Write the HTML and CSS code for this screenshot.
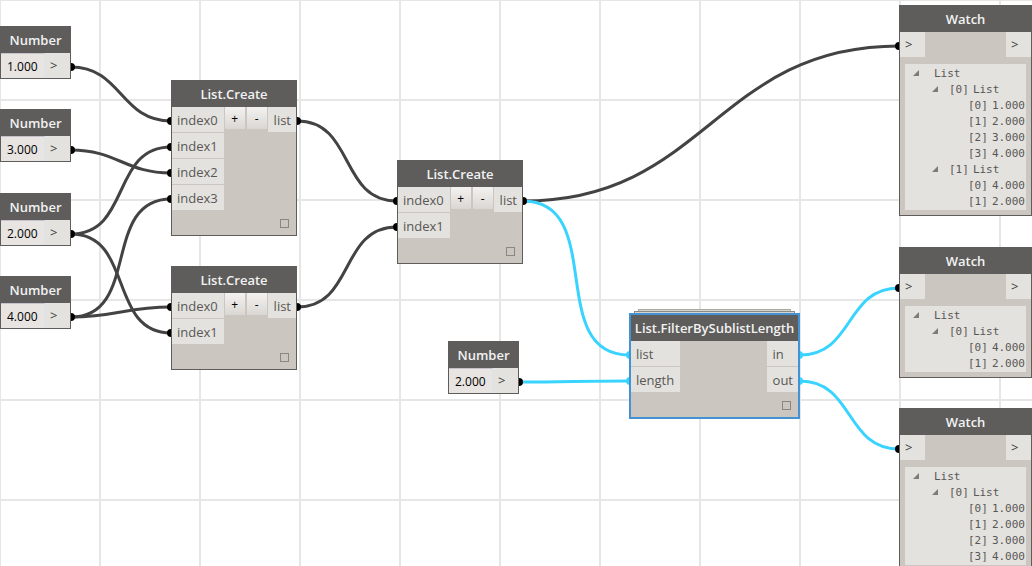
FILE: index.html
```html
<!DOCTYPE html>
<html lang="en">
<head>
<meta charset="utf-8">
<title>Node graph</title>
<link rel="stylesheet" href="styles.css">
</head>
<body>
<main class="canvas">
  <svg class="wires" aria-hidden="true">
    <g class="wire">
      <path d="M71 67C122 67 120 121 171 121"/>
      <path d="M71 150C117 150 125 173 171 173"/>
      <path d="M71 234C131 234 111 147 171 147"/>
      <path d="M71 234C134 234 108 333 171 333"/>
      <path d="M71 317C141 317 101 199 171 199"/>
      <path d="M71 317C116 317 126 307 171 307"/>
      <path d="M297 121C355 121 339 201 397 201"/>
      <path d="M297 307C355 307 339 227 397 227"/>
      <path d="M523 201C706 201 716 46 899 46"/>
    </g>
    <g class="wire wire-active">
      <path d="M523 201C607 201 545 355 629 355"/>
      <path d="M519 382C569 382 579 381 629 381"/>
      <path d="M800 355C854 355 845 288 899 288"/>
      <path d="M800 381C854 381 845 449 899 449"/>
    </g>
    <g class="dots">
      <circle cx="71" cy="67" r="4"/><circle cx="71" cy="150" r="4"/>
      <circle cx="71" cy="234" r="4"/><circle cx="71" cy="317" r="4"/>
      <circle cx="171" cy="121" r="4"/><circle cx="171" cy="147" r="4"/>
      <circle cx="171" cy="173" r="4"/><circle cx="171" cy="199" r="4"/>
      <circle cx="171" cy="307" r="4"/><circle cx="171" cy="333" r="4"/>
      <circle cx="297" cy="121" r="4"/><circle cx="297" cy="307" r="4"/>
      <circle cx="397" cy="201" r="4"/><circle cx="397" cy="227" r="4"/>
      <circle cx="523" cy="201" r="4"/><circle cx="519" cy="382" r="4"/>
      <circle cx="899" cy="46" r="4"/><circle cx="899" cy="288" r="4"/>
      <circle cx="899" cy="449" r="4"/>
    </g>
    <g class="dots dots-active">
      <circle cx="630" cy="355" r="4"/><circle cx="630" cy="381" r="4"/>
      <circle cx="799" cy="355" r="4"/><circle cx="799" cy="381" r="4"/>
    </g>
  </svg>

  <section class="node number number-a">
    <h2 class="title">Number</h2>
    <div class="row"><input class="value" type="text" value="1.000" aria-label="Number value"><span class="port arrow">&gt;</span></div>
  </section>
  <section class="node number number-b">
    <h2 class="title">Number</h2>
    <div class="row"><input class="value" type="text" value="3.000" aria-label="Number value"><span class="port arrow">&gt;</span></div>
  </section>
  <section class="node number number-c">
    <h2 class="title">Number</h2>
    <div class="row"><input class="value" type="text" value="2.000" aria-label="Number value"><span class="port arrow">&gt;</span></div>
  </section>
  <section class="node number number-d">
    <h2 class="title">Number</h2>
    <div class="row"><input class="value" type="text" value="4.000" aria-label="Number value"><span class="port arrow">&gt;</span></div>
  </section>
  <section class="node number number-e">
    <h2 class="title">Number</h2>
    <div class="row"><input class="value" type="text" value="2.000" aria-label="Number value"><span class="port arrow">&gt;</span></div>
  </section>

  <section class="node create create-a">
    <h2 class="title">List.Create</h2>
    <div class="row">
      <div class="ports"><span class="port">index0</span><span class="port">index1</span><span class="port">index2</span><span class="port">index3</span></div>
      <div class="steps"><button class="step" type="button" aria-label="Add input">+</button><button class="step" type="button" aria-label="Remove input">-</button></div>
      <div class="ports"><span class="port out">list</span></div>
    </div>
    <div class="footer"><input class="lacing" type="checkbox" aria-label="Lacing"></div>
  </section>
  <section class="node create create-b">
    <h2 class="title">List.Create</h2>
    <div class="row">
      <div class="ports"><span class="port">index0</span><span class="port">index1</span></div>
      <div class="steps"><button class="step" type="button" aria-label="Add input">+</button><button class="step" type="button" aria-label="Remove input">-</button></div>
      <div class="ports"><span class="port out">list</span></div>
    </div>
    <div class="footer"><input class="lacing" type="checkbox" aria-label="Lacing"></div>
  </section>
  <section class="node create create-c">
    <h2 class="title">List.Create</h2>
    <div class="row">
      <div class="ports"><span class="port">index0</span><span class="port">index1</span></div>
      <div class="steps"><button class="step" type="button" aria-label="Add input">+</button><button class="step" type="button" aria-label="Remove input">-</button></div>
      <div class="ports"><span class="port out">list</span></div>
    </div>
    <div class="footer"><input class="lacing" type="checkbox" aria-label="Lacing"></div>
  </section>

  <div class="sheet sheet-back"></div>
  <div class="sheet sheet-front"></div>
  <section class="node filter">
    <h2 class="title">List.FilterBySublistLength</h2>
    <div class="row">
      <div class="ports"><span class="port">list</span><span class="port">length</span></div>
      <div class="ports"><span class="port out">in</span><span class="port out">out</span></div>
    </div>
    <div class="footer"><input class="lacing" type="checkbox" aria-label="Lacing"></div>
  </section>

  <section class="node watch watch-a">
    <h2 class="title">Watch</h2>
    <div class="row"><span class="port arrow">&gt;</span><span class="port arrow">&gt;</span></div>
    <ul class="tree">
      <li><div class="item"><button class="caret" type="button" aria-label="Collapse"></button><span></span><span>List</span></div>
        <ul class="branch">
          <li><div class="item"><button class="caret" type="button" aria-label="Collapse"></button><span>[0]</span><span>List</span></div>
            <ul class="branch">
              <li class="item leaf"><span>[0]</span><span>1.000</span></li>
              <li class="item leaf"><span>[1]</span><span>2.000</span></li>
              <li class="item leaf"><span>[2]</span><span>3.000</span></li>
              <li class="item leaf"><span>[3]</span><span>4.000</span></li>
            </ul>
          </li>
          <li><div class="item"><button class="caret" type="button" aria-label="Collapse"></button><span>[1]</span><span>List</span></div>
            <ul class="branch">
              <li class="item leaf"><span>[0]</span><span>4.000</span></li>
              <li class="item leaf"><span>[1]</span><span>2.000</span></li>
            </ul>
          </li>
        </ul>
      </li>
    </ul>
  </section>
  <section class="node watch watch-b">
    <h2 class="title">Watch</h2>
    <div class="row"><span class="port arrow">&gt;</span><span class="port arrow">&gt;</span></div>
    <ul class="tree">
      <li><div class="item"><button class="caret" type="button" aria-label="Collapse"></button><span></span><span>List</span></div>
        <ul class="branch">
          <li><div class="item"><button class="caret" type="button" aria-label="Collapse"></button><span>[0]</span><span>List</span></div>
            <ul class="branch">
              <li class="item leaf"><span>[0]</span><span>4.000</span></li>
              <li class="item leaf"><span>[1]</span><span>2.000</span></li>
            </ul>
          </li>
        </ul>
      </li>
    </ul>
  </section>
  <section class="node watch watch-c">
    <h2 class="title">Watch</h2>
    <div class="row"><span class="port arrow">&gt;</span><span class="port arrow">&gt;</span></div>
    <ul class="tree">
      <li><div class="item"><button class="caret" type="button" aria-label="Collapse"></button><span></span><span>List</span></div>
        <ul class="branch">
          <li><div class="item"><button class="caret" type="button" aria-label="Collapse"></button><span>[0]</span><span>List</span></div>
            <ul class="branch">
              <li class="item leaf"><span>[0]</span><span>1.000</span></li>
              <li class="item leaf"><span>[1]</span><span>2.000</span></li>
              <li class="item leaf"><span>[2]</span><span>3.000</span></li>
              <li class="item leaf"><span>[3]</span><span>4.000</span></li>
            </ul>
          </li>
        </ul>
      </li>
    </ul>
  </section>
</main>
</body>
</html>
```
FILE: styles.css
```css
* { box-sizing: border-box; }

body {
  margin: 0;
  font: 13px/27px "Open Sans", sans-serif;
  color: #585755;
}

.canvas {
  position: relative;
  height: 100vh;
  overflow: hidden;
  background-color: #fff;
  background-image:
    linear-gradient(#e6e6e6 2px, transparent 2px),
    linear-gradient(90deg, #e6e6e6 2px, transparent 2px);
  background-size: 100px 100px;
  background-position: -1px -1px;
}

.wires { position: absolute; inset: 0; width: 100%; height: 100%; }
.wire { fill: none; stroke: #434343; stroke-width: 3; }
.wire-active { stroke: #38d4ff; }
.dots { fill: #000; }
.dots-active { fill: #38d4ff; }

/* Nodes */
.node {
  position: absolute;
  border: 1px solid #5e5d5b;
  background: #cbc6bf;
}
.title {
  margin: 0;
  height: 26px;
  background: #5e5d5b;
  color: #f2f2f2;
  font-size: 13px;
  font-weight: 600;
  text-align: center;
  white-space: nowrap;
}
.row { display: flex; justify-content: space-between; align-items: flex-start; }
.ports { display: grid; gap: 1px; background: #cbc6bf; }
.port {
  display: block;
  height: 25px;
  padding: 0 6px 0 5px;
  background: #e4e2de;
}
.out { padding: 0 5px 0 6px; }
.arrow {
  width: 25px;
  line-height: 25px;
  color: #3c3b3a;
}
.footer {
  display: flex;
  height: 25px;
  padding: 9px 7px 0;
  justify-content: flex-end;
}
.lacing {
  appearance: none;
  width: 9px;
  height: 9px;
  margin: 0;
  border: 1px solid #8a8782;
}

/* Number */
.number { width: 71px; }
.value {
  flex: 1;
  min-width: 0;
  height: 25px;
  padding: 0 6px;
  border: 0;
  border-top: 1px solid #c4c2cc;
  border-right: 1px solid #dfe2ec;
  border-radius: 0;
  background: #e8e4e1;
  color: #000;
  font: 12px "Open Sans", sans-serif;
}
.number-a { left: 0; top: 26px; }
.number-b { left: 0; top: 109px; }
.number-c { left: 0; top: 193px; }
.number-d { left: 0; top: 276px; }
.number-e { left: 448px; top: 341px; }

/* List.Create */
.create { width: 126px; }
.steps { display: flex; gap: 2px; }
.step {
  width: 20px;
  height: 22px;
  padding: 0;
  border: 0;
  background: linear-gradient(#f3f2f0, #dad7d3);
  color: #000;
  font: 12px "Open Sans", sans-serif;
}
.create-a { left: 171px; top: 80px; }
.create-b { left: 171px; top: 266px; }
.create-c { left: 397px; top: 160px; }

/* Selected node with stacked sheets behind it */
.sheet {
  position: absolute;
  height: 8px;
  border: 1px solid #8b8b85;
  background: #d6d5cf;
}
.sheet-back { left: 638px; top: 309px; width: 153px; border-color: #a9a9a3; }
.sheet-front { left: 634px; top: 311px; width: 161px; }
.filter { left: 629px; top: 313px; width: 171px; border: 2px solid #4392d3; }

/* Watch */
.watch { width: 133px; }
.tree, .branch { margin: 0; padding: 0; list-style: none; }
.tree {
  margin: 7px 5px 5px;
  padding: 2px 0 0 8px;
  background: #e4e2de;
  font: 11px/16px "DejaVu Sans Mono", monospace;
  white-space: nowrap;
}
.branch { padding-left: 19px; }
.item { display: flex; height: 16px; gap: 4px; }
.leaf { padding-left: 17px; }
.caret {
  width: 13px;
  height: 16px;
  padding: 0 0 2px;
  border: 0;
  background: none;
}
.caret::before {
  content: "";
  display: block;
  width: 6px;
  height: 6px;
  background: #7d7b78;
  clip-path: polygon(100% 0, 100% 100%, 0 100%);
}
.watch-a { left: 899px; top: 5px; }
.watch-b { left: 899px; top: 247px; }
.watch-c { left: 899px; top: 408px; }
```
